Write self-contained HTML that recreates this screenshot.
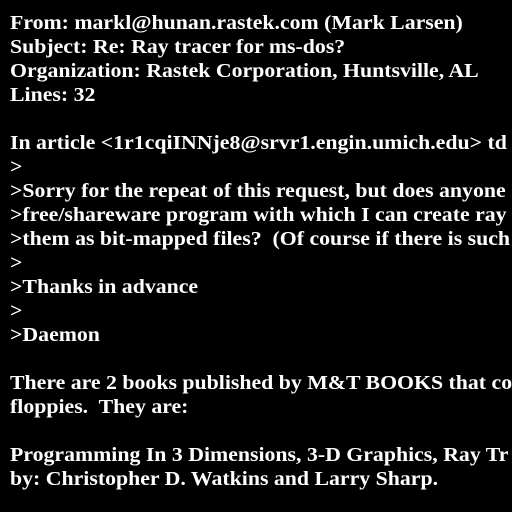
<!DOCTYPE html>
<html><head><style>
body{margin:0;background:#000;width:512px;height:512px;overflow:hidden;position:relative}
pre{margin:0;position:absolute;left:10px;top:11px;color:#fff;font-family:"Liberation Serif",serif;font-weight:bold;font-size:20px;line-height:24px;white-space:pre;transform:scaleX(1.09);transform-origin:0 0}
</style></head><body><pre>From: markl@hunan.rastek.com (Mark Larsen)
Subject: Re: Ray tracer for ms-dos?
Organization: Rastek Corporation, Huntsville, AL
Lines: 32

In article &lt;1r1cqiINNje8@srvr1.engin.umich.edu&gt; td
&gt;
&gt;Sorry for the repeat of this request, but does anyone
&gt;free/shareware program with which I can create ray
&gt;them as bit-mapped files?  (Of course if there is such
&gt;
&gt;Thanks in advance
&gt;
&gt;Daemon

There are 2 books published by M&amp;T BOOKS that co
floppies.  They are:

Programming In 3 Dimensions, 3-D Graphics, Ray Tr
by: Christopher D. Watkins and Larry Sharp.</pre></body></html>
